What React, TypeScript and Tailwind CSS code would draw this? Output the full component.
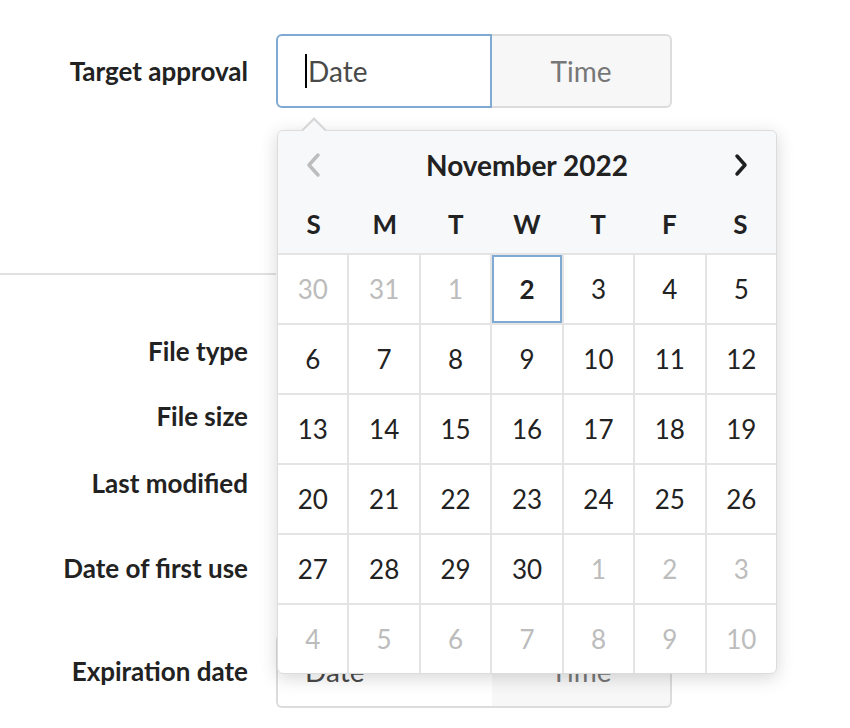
import React from "react"

const weeks: { d: number; muted?: boolean; selected?: boolean }[][] = [
  [{ d: 30, muted: true }, { d: 31, muted: true }, { d: 1, muted: true }, { d: 2, selected: true }, { d: 3 }, { d: 4 }, { d: 5 }],
  [6, 7, 8, 9, 10, 11, 12].map((d) => ({ d })),
  [13, 14, 15, 16, 17, 18, 19].map((d) => ({ d })),
  [20, 21, 22, 23, 24, 25, 26].map((d) => ({ d })),
  [{ d: 27 }, { d: 28 }, { d: 29 }, { d: 30 }, { d: 1, muted: true }, { d: 2, muted: true }, { d: 3, muted: true }],
  [4, 5, 6, 7, 8, 9, 10].map((d) => ({ d, muted: true })),
]

const weekdays = ["S", "M", "T", "W", "T", "F", "S"]

function Label({ children }: { children: React.ReactNode }) {
  return (
    <div className="w-[248px] shrink-0 text-right text-[26px] font-bold text-[#222] leading-none">
      {children}
    </div>
  )
}

function Calendar() {
  return (
    <div className="absolute left-[1px] top-[96px] z-10 w-[500px] rounded-md border border-[#dcdcdc] bg-white shadow-[0_4px_18px_rgba(0,0,0,0.16)]">
      {/* caret */}
      <div className="absolute left-[27px] top-[-10px] h-[18px] w-[18px] rotate-45 border-l-2 border-t-2 border-[#d6d6d6] bg-[#f7f8fa]" />
      <div className="relative rounded-t-md bg-[#f7f8fa]">
        <div className="flex h-[67px] items-center justify-between px-[27px]">
          <svg width="16" height="26" viewBox="0 0 16 26" fill="none">
            <path d="M13 3 L4 13 L13 23" stroke="#bdbdbd" strokeWidth="3.5" strokeLinecap="round" strokeLinejoin="round" />
          </svg>
          <div className="text-[28px] font-bold text-[#222]">November 2022</div>
          <svg width="16" height="26" viewBox="0 0 16 26" fill="none">
            <path d="M4 4 L12 13 L4 22" stroke="#1f1f1f" strokeWidth="3.5" strokeLinecap="round" strokeLinejoin="round" />
          </svg>
        </div>
        <div className="grid h-[55px] grid-cols-7 items-center pb-[2px] text-[26px] font-bold text-[#222]">
          {weekdays.map((w, i) => (
            <div key={i} className="text-center">{w}</div>
          ))}
        </div>
      </div>
      <div className="grid grid-cols-7 gap-[2px] overflow-hidden rounded-b-md border-t-2 border-[#e4e4e4] bg-[#e4e4e4]">
        {weeks.flat().map((c, i) => (
          <div
            key={i}
            className={
              "flex h-[68px] items-center justify-center bg-white text-[26px] " +
              (c.selected
                ? "border-2 border-[#7eaad3] font-bold text-[#222]"
                : c.muted
                ? "text-[#bcbcbc]"
                : "text-[#222]")
            }
          >
            {c.d}
          </div>
        ))}
      </div>
    </div>
  )
}

function DateTime({ focused }: { focused?: boolean }) {
  return (
    <div className="relative flex h-[74px] w-[396px]">
      <div
        className={
          "flex w-[216px] items-center rounded-l-md border-2 bg-white pl-[27px] text-[28px] text-[#4a4a4a] " +
          (focused ? "border-[#7eaad3]" : "border-r-0 border-[#dcdcdc]")
        }
      >
        {focused && <span className="mr-[1px] inline-block h-[34px] w-[2px] bg-black" />}
        Date
      </div>
      <div className="flex flex-1 items-center justify-center rounded-r-md border-2 border-l-0 border-[#dcdcdc] bg-[#f7f7f7] text-[28px] text-[#777]">
        Time
      </div>
    </div>
  )
}

export default function App() {
  return (
    <div className="min-h-[728px] bg-white font-['Lato',sans-serif] pt-[34px]">
      <div className="flex items-center gap-[28px]">
        <Label>Target approval</Label>
        <div className="relative">
          <DateTime focused />
          <Calendar />
        </div>
      </div>

      <div className="mt-[165px] h-[2px] w-[276px] bg-[#e0e0e0]" />

      <div className="mt-[43px] flex h-[66px] items-center">
        <Label>File type</Label>
      </div>
      <div className="flex h-[64px] items-center">
        <Label>File size</Label>
      </div>
      <div className="flex h-[70px] items-center">
        <Label>Last modified</Label>
      </div>
      <div className="flex h-[100px] items-center">
        <Label>Date of first use</Label>
      </div>
      <div className="mt-[16px] flex items-center gap-[28px]">
        <Label>Expiration date</Label>
        <DateTime />
      </div>
    </div>
  )
}
